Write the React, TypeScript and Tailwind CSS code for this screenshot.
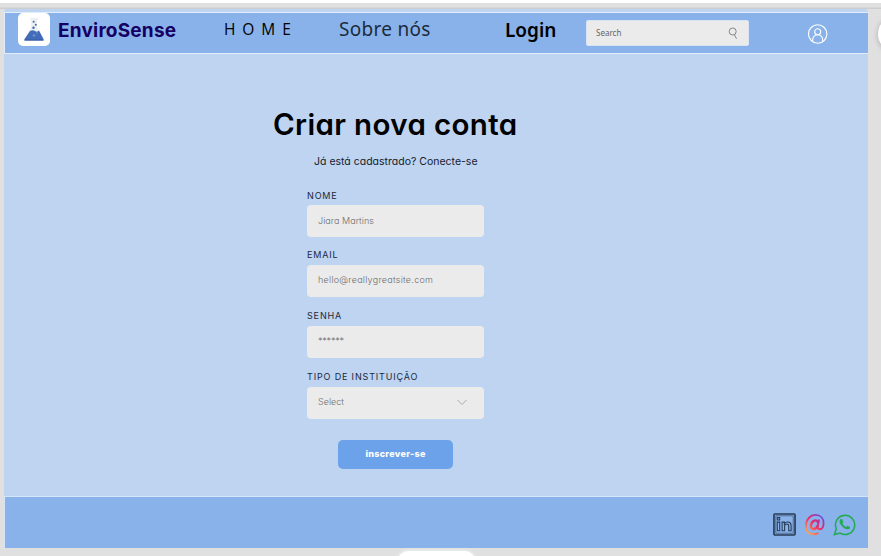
import type { ReactNode } from "react";

const geo = "font-['Inter',sans-serif] [font-feature-settings:'cv11'] whitespace-nowrap";

function Field({ label, gap, boxGap = "mt-[5px]", textClass = "pb-[2px]", children }: { label: string; gap: string; boxGap?: string; textClass?: string; children: ReactNode }) {
  return (
    <label className={`block ${gap}`}>
      <span className={`block h-[10px] text-[9px] leading-[10px] tracking-[0.85px] text-[#20283c] ${geo}`}>{label}</span>
      <span className={`flex h-8 w-[177px] items-center rounded-[4px] bg-[#ebebeb] pl-[11px] text-[9px] font-light text-[#6c6c6c] ${boxGap} ${textClass} ${geo}`}>
        {children}
      </span>
    </label>
  );
}

function Flask() {
  return (
    <svg viewBox="0 0 32 33" className="h-[33px] w-8">
      <path d="M13 5h7v2h-1v7l6 12v1H7v-1l6-12V7h-1V5z" fill="#edf0f1" />
      <path d="M12 18q3-1.5 5 0t4-.5L25.5 26v1.5h-19V26z" fill="#426bb9" />
      <path d="M6.5 26.5h19v1h-19z" fill="#365a9f" />
      <g fill="#3d69b8">
        <circle cx="15.6" cy="8.8" r="1" />
        <circle cx="17.8" cy="11.8" r="1" />
        <circle cx="15.5" cy="14.8" r="1.2" />
      </g>
      <g fill="#7392cc">
        <circle cx="16" cy="22.5" r="1.3" />
        <circle cx="19" cy="20" r=".8" />
      </g>
    </svg>
  );
}

export default function App() {
  return (
    <div className="relative h-[556px] w-[881px] overflow-hidden bg-[#e0e0e0]">
      <div className="h-[3px] bg-white" />
      <div className="h-[6px] bg-gradient-to-b from-[#e0e0e0] from-60% to-[#c6c8cb]" />
      <div className="ml-1 flex h-[539px] w-[864px] flex-col rounded-t-[3px] bg-[#bed4f1] pt-[3px]">
        <header className="flex h-[42px] shrink-0 items-start border-y border-l border-[#e2edfb] bg-[#89b2ea]">
          <div className="ml-[13px] h-[33px] w-8 rounded-[5px] bg-white">
            <Flask />
          </div>
          <span className={`ml-2 mt-[6px] w-[166px] text-[19px] font-bold leading-6 tracking-[0.2px] text-[#150063] ${geo}`}>EnviroSense</span>
          <span className="mt-[4px] w-[115px] whitespace-nowrap font-['Open_Sans',sans-serif] text-[15.5px] font-normal leading-6 tracking-[6.9px] text-black">HOME</span>
          <span className="mt-[4px] w-[166px] whitespace-nowrap font-['Noto_Sans',sans-serif] text-[19px] font-normal leading-6 tracking-[0.3px] text-[#1c2b3c]">Sobre nós</span>
          <span className="mt-[5px] w-[81px] whitespace-nowrap font-['Noto_Sans',sans-serif] text-[19px] font-semibold leading-6 text-black">Login</span>
          <div className="mt-[7px] flex h-[26px] w-[163px] items-center justify-between rounded-[2px] border border-[#d8e3f3] bg-[#ebebeb] pl-[9px] pr-[10px] font-['Noto_Sans',sans-serif] text-[8px] text-[#666]">
            <span>Search</span>
            <svg viewBox="0 0 10 13" className="h-[13px] w-[10px]" fill="none" stroke="#858585" strokeWidth="1">
              <circle cx="4.7" cy="4.5" r="3.5" />
              <path d="M6.4 7.7 8.5 11.8" />
            </svg>
          </div>
          <svg viewBox="0 0 20 20" className="ml-[59px] mt-[11px] size-5" fill="none" stroke="white" strokeWidth="1.1">
            <circle cx="9.7" cy="10" r="9.2" />
            <circle cx="9.7" cy="7.7" r="3" />
            <path d="M4.7 17.2v-1.5a5 5 0 0 1 10 0v1.5" />
          </svg>
        </header>

        <main className="flex flex-1 flex-col pl-[303px]">
          <h1 className={`-ml-[34px] mt-[52px] h-9 text-[29.5px] font-semibold leading-9 tracking-[0.35px] text-black ${geo}`}>Criar nova conta</h1>
          <p className={`ml-[7px] mt-[12px] h-4 text-[10.5px] leading-4 text-[#17202c] ${geo}`}>Já está cadastrado? Conecte-se</p>
          <form>
            <Field label="NOME" gap="mt-[21px]" boxGap="mt-[4px]" textClass="tracking-[0.06px]">Jiara Martins</Field>
            <Field label="EMAIL" gap="mt-[13px]" textClass="pb-[2px] tracking-[0.26px]">hello@reallygreatsite.com</Field>
            <Field label="SENHA" gap="mt-[14px]" textClass="pb-[2px] tracking-[-0.2px]">******</Field>
            <Field label="TIPO DE INSTITUIÇÃO" gap="mt-[14px]">
              <span>Select</span>
              <svg viewBox="0 0 10 6" className="ml-auto mr-[17px] h-[6px] w-[10px] overflow-visible" fill="none" stroke="#999" strokeWidth=".8">
                <path d="m.5 1 4.500 4.500L9.500 1" />
              </svg>
            </Field>
            <button type="button" className={`ml-[31px] mt-[21px] block h-[29px] w-[115px] rounded-[5px] bg-[#6ca2e9] pb-[1px] text-[9px] font-extrabold tracking-[0.3px] text-white ${geo}`}>inscrever-se</button>
          </form>
        </main>

        <footer className="flex h-[52px] shrink-0 items-start justify-end gap-[8px] border-l border-t border-[#d5e4f8] bg-[#89b2ea] pr-[12px] pt-[15px]">
          <svg viewBox="0 0 24 24" className="mt-px size-[23px]" fill="none" stroke="#263b55">
            <rect x="1" y="1" width="22" height="22" rx="1" strokeWidth="1.7" />
            <rect x="3" y="3" width="18" height="18" strokeWidth=".6" />
            <path strokeWidth="1.1" d="M4.500 9.500h2.500v9H4.500zM4.500 4.800h2.500v2.500H4.500zM9.500 9.500h2.400V11c1.500-2.500 7-2.500 7 2.200v5.300h-2.500v-5c0-2.700-4.300-2.600-4.300.2v4.800H9.500z" />
          </svg>
          <svg viewBox="0 0 22 24" className="mt-px h-[23px] w-[21px]" fill="none" stroke="url(#social)" strokeWidth="1.9" strokeLinecap="round">
            <defs>
              <linearGradient id="social" x1="2" y1="22" x2="19" y2="3" gradientUnits="userSpaceOnUse">
                <stop stopColor="#ffc04a" />
                <stop offset=".25" stopColor="#ff7555" />
                <stop offset=".55" stopColor="#ee2864" />
                <stop offset="1" stopColor="#7146dc" />
              </linearGradient>
            </defs>
            <path d="M14.500 21.300C7 24 2 20 2 13.500 2 7 6.500 2 12 2s8.500 3.800 8.500 8.500c0 4-1.700 6.500-4 6.500-2 0-2.400-1.500-2-3.500l1.200-6" />
            <path strokeWidth="2.500" d="M14.700 10c-1-4-6.500-2.500-7.400 2.500-.8 5 4.800 6 7 .8" />
          </svg>
          <svg viewBox="0 0 24 24" className="mt-px size-[23px]" fill="none" stroke="#25a957">
            <path strokeWidth="1.600" d="M1.500 22.500 3.500 16.500A10 10 0 1 1 7.500 21z" />
            <path fill="#25a957" stroke="none" d="M7.800 6.500c-1.500.9-1.400 3.300.5 6 2.100 3 5.300 4.900 7.500 4.500 1.500-.3 2.200-1.700 1.800-2.500l-2.500-1.300-1.500 1.300c-1.500-.6-3-2-3.800-3.500l1.100-1.400-1.200-2.800c-.3-.5-1.200-.7-1.900-.3z" />
          </svg>
        </footer>
      </div>
      <div className="absolute left-[398px] top-[551px] h-5 w-[77px] rounded-t-[10px] bg-white shadow-[0_0_3px_1px_#eeeeee]" />
      <div className="absolute left-[878px] top-[16px] size-[36px] rounded-full bg-white shadow-[0_1px_5px_1px_#bbbbbb]" />
    </div>
  );
}
